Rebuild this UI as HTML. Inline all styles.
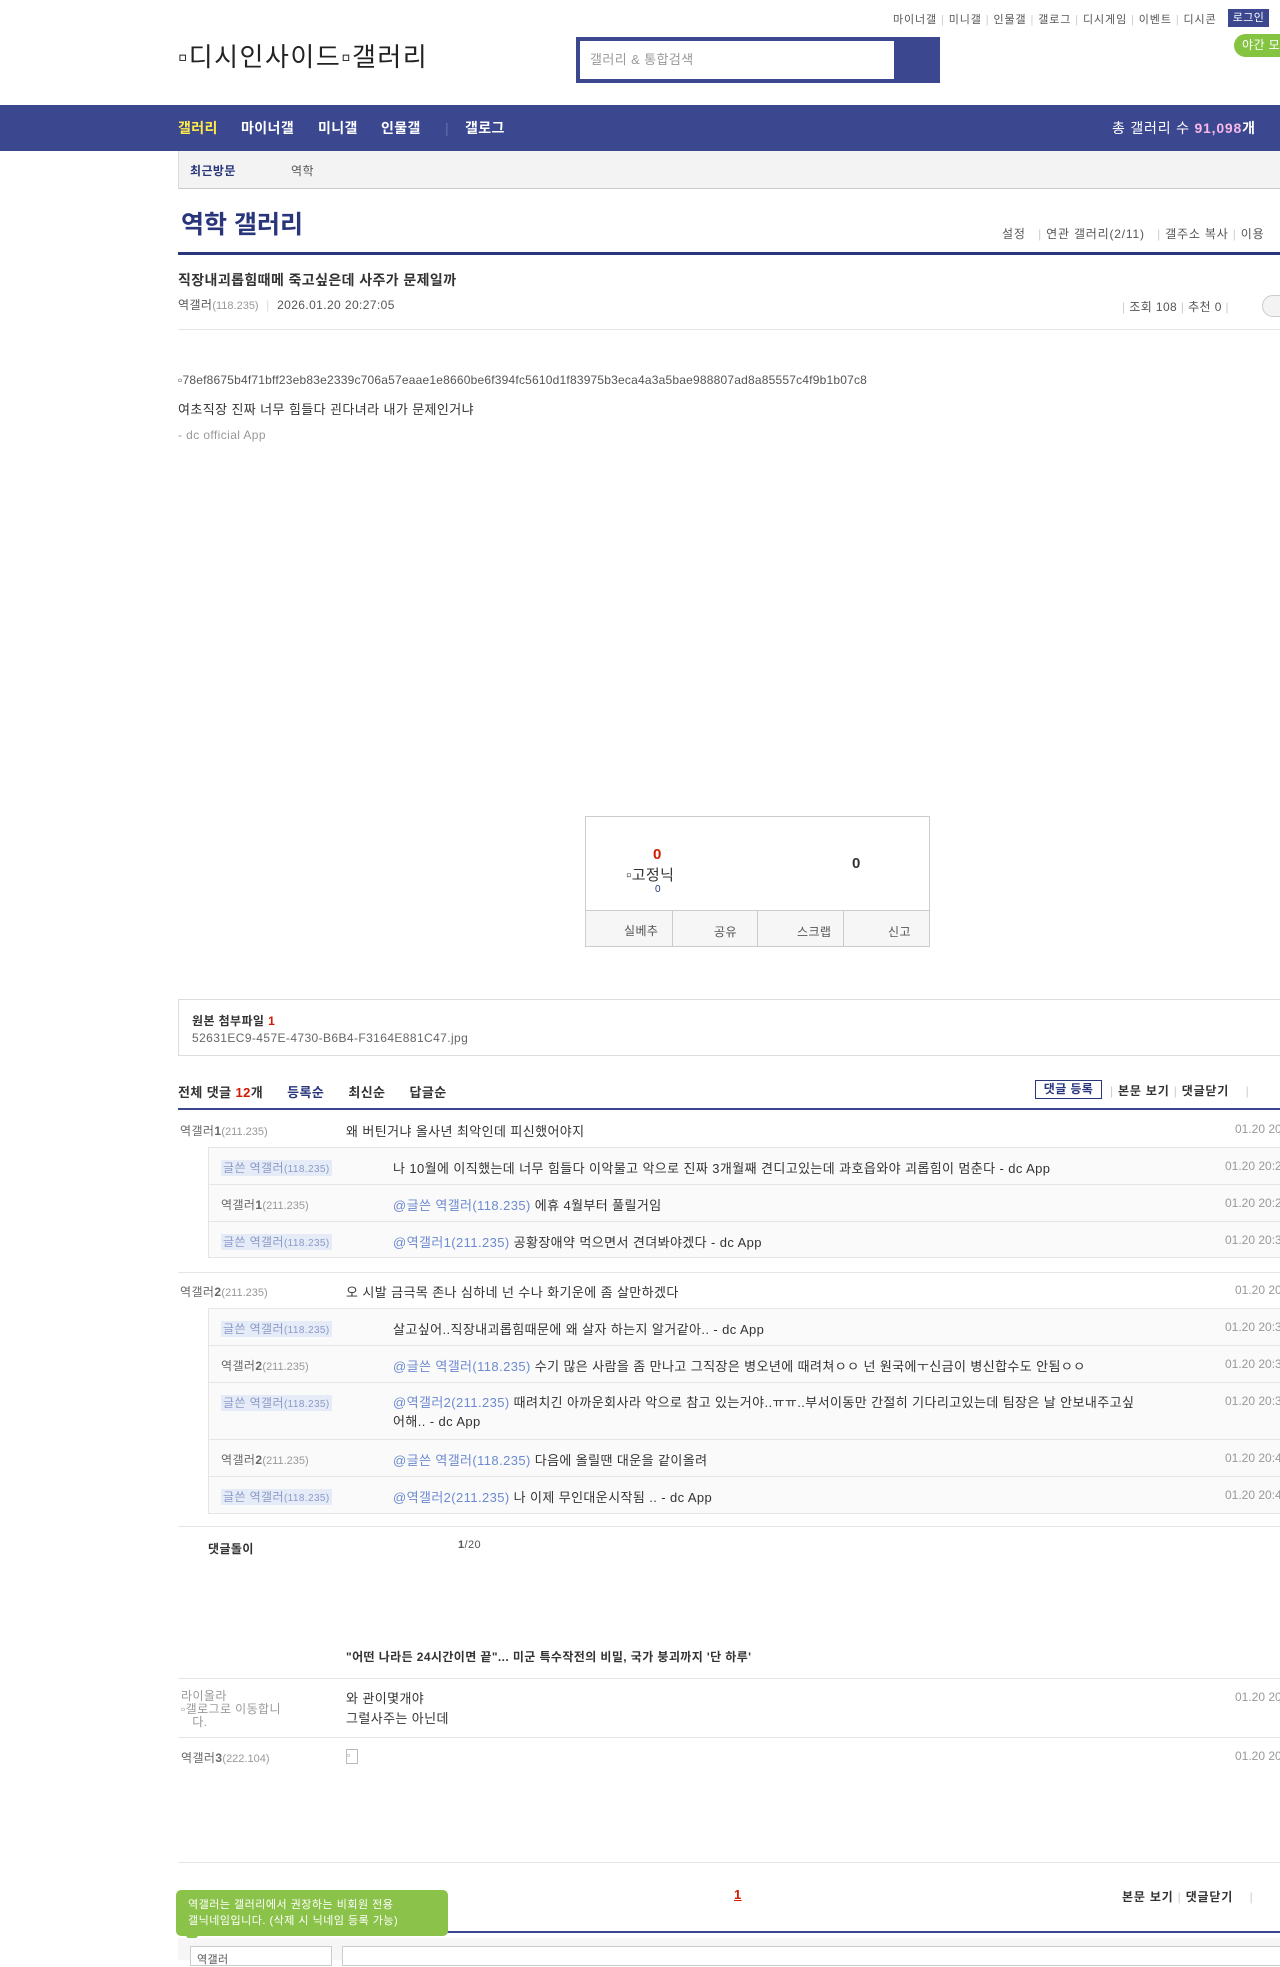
<!DOCTYPE html>
<html><head><meta charset="utf-8">
<style>
*{margin:0;padding:0;box-sizing:border-box}
body{width:1280px;height:1960px;overflow:hidden;background:#fff;font-family:"Liberation Sans","Noto Sans CJK KR",sans-serif;color:#333;position:relative;font-size:13px;letter-spacing:0.4px}
.a{position:absolute;white-space:nowrap}
.nick{color:#666;font-size:12px}
.ip{color:#999;font-size:11px;letter-spacing:0}
.hl{background:#e6ecf7;color:#8a99c8;font-size:12px;padding:1px 2px}
.blue{color:#6c8ad0}
.date{color:#999;font-size:12px;letter-spacing:0}
.line{position:absolute;height:1px;background:#e5e5e5}
.n{position:absolute;top:119px;font-size:14px;font-weight:bold;color:#fff;line-height:18px;white-space:nowrap}
</style></head><body>
<div class="a" style="left:893px;top:11px;font-size:11px;color:#555;letter-spacing:0.9px">마이너갤 <span style="color:#ccc">|</span> 미니갤 <span style="color:#ccc">|</span> 인물갤 <span style="color:#ccc">|</span> 갤로그 <span style="color:#ccc">|</span> 디시게임 <span style="color:#ccc">|</span> 이벤트 <span style="color:#ccc">|</span> 디시콘</div>
<div class="a" style="left:1228px;top:9px;width:41px;height:18px;background:#3b4890;color:#fff;font-size:11px;text-align:center;line-height:18px">로그인</div>
<div class="a" style="left:1234px;top:34px;width:60px;height:23px;background:#84c441;color:#fff;font-size:12px;line-height:23px;padding-left:8px;border-radius:12px">야간 모드</div>
<div class="a" style="left:178px;top:37px;font-size:26px;color:#222;letter-spacing:1.5px">▫디시인사이드▫갤러리</div>
<div class="a" style="left:576px;top:37px;width:364px;height:46px;background:#3b4890"></div>
<div class="a" style="left:580px;top:41px;width:314px;height:38px;background:#fff;color:#999;font-size:13px;line-height:38px;padding-left:10px">갤러리 &amp; 통합검색</div>
<div class="a" style="left:0;top:105px;width:1280px;height:46px;background:#3b4890"></div>
<div class="n" style="left:178px;color:#ffed45">갤러리</div>
<div class="n" style="left:241px">마이너갤</div>
<div class="n" style="left:318px">미니갤</div>
<div class="n" style="left:381px">인물갤</div>
<div class="n" style="left:445px;color:#6470aa;font-weight:normal">|</div>
<div class="n" style="left:465px">갤로그</div>
<div class="a" style="left:1112px;top:119px;font-size:14px;color:#fff;line-height:18px;letter-spacing:0.8px">총 갤러리 수 <b style="color:#f7b8e8">91,098</b><b>개</b></div>
<div class="a" style="left:178px;top:151px;width:1102px;height:38px;background:#f3f3f3;border-bottom:1px solid #ccc;border-left:1px solid #ddd"></div>
<div class="a" style="left:190px;top:162px;font-size:12px;color:#29367c;font-weight:bold">최근방문</div>
<div class="a" style="left:291px;top:162px;font-size:12px;color:#555">역학</div>
<div class="a" style="left:181px;top:205px;font-size:25px;color:#29367c;font-weight:bold;letter-spacing:0">역학 갤러리</div>
<div class="a" style="left:1002px;top:225px;font-size:12px;color:#555;letter-spacing:0.8px">설정 &nbsp;&nbsp;<span style="color:#ccc">|</span> 연관 갤러리(2/11) &nbsp;&nbsp;<span style="color:#ccc">|</span> 갤주소 복사 <span style="color:#ccc">|</span> 이용</div>
<div class="a" style="left:178px;top:252px;width:1102px;height:3px;background:#29367c"></div>
<div class="a" style="left:178px;top:270px;font-size:14px;font-weight:bold;color:#333">직장내괴롭힘때메 죽고싶은데 사주가 문제일까</div>
<div class="a" style="left:178px;top:296px;font-size:12px;color:#555">역갤러<span class="ip">(118.235)</span> <span style="color:#ddd">&nbsp;|&nbsp;</span> 2026.01.20 20:27:05</div>
<div class="a" style="left:1122px;top:298px;font-size:12px;color:#555"><span style="color:#ccc">|</span> 조회 108 <span style="color:#ccc">|</span> 추천 0 <span style="color:#ccc">|</span></div>
<div class="a" style="left:1262px;top:295px;width:30px;height:22px;border:1px solid #ccc;border-radius:11px;background:#f3f3f3"></div>
<div class="line" style="left:178px;top:329px;width:1102px"></div>
<div class="a" style="left:178px;top:373px;font-size:12px;color:#555;letter-spacing:0.2px">▫78ef8675b4f71bff23eb83e2339c706a57eaae1e8660be6f394fc5610d1f83975b3eca4a3a5bae988807ad8a85557c4f9b1b07c8</div>
<div class="a" style="left:178px;top:399px;font-size:13px;color:#333">여초직장 진짜 너무 힘들다 괸다녀라 내가 문제인거냐</div>
<div class="a" style="left:178px;top:428px;font-size:12px;color:#999">- dc official App</div>
<div class="a" style="left:585px;top:816px;width:345px;height:131px;border:1px solid #ccc"></div>
<div class="a" style="left:585px;top:910px;width:345px;height:37px;background:#f6f6f6;border:1px solid #ccc"></div>
<div class="a" style="left:672px;top:910px;width:1px;height:37px;background:#ccc"></div>
<div class="a" style="left:757px;top:910px;width:1px;height:37px;background:#ccc"></div>
<div class="a" style="left:843px;top:910px;width:1px;height:37px;background:#ccc"></div>
<div class="a" style="left:624px;top:922px;font-size:12px;color:#555">실베추</div>
<div class="a" style="left:714px;top:923px;font-size:12px;color:#555">공유</div>
<div class="a" style="left:797px;top:923px;font-size:12px;color:#555">스크랩</div>
<div class="a" style="left:888px;top:923px;font-size:12px;color:#555">신고</div>
<div class="a" style="left:653px;top:846px;font-size:15px;font-weight:bold;color:#d31900">0</div>
<div class="a" style="left:626px;top:864px;font-size:15px;color:#333">▫고정닉</div>
<div class="a" style="left:655px;top:884px;font-size:10px;color:#29367c">0</div>
<div class="a" style="left:852px;top:855px;font-size:15px;font-weight:bold;color:#333">0</div>
<div class="a" style="left:178px;top:999px;width:1110px;height:57px;border:1px solid #ddd"></div>
<div class="a" style="left:192px;top:1012px;font-size:12px;font-weight:bold;color:#333">원본 첨부파일 <span style="color:#d31900">1</span></div>
<div class="a" style="left:192px;top:1031px;font-size:12px;color:#666">52631EC9-457E-4730-B6B4-F3164E881C47.jpg</div>
<div class="a" style="left:178px;top:1082px;font-size:13px;font-weight:bold;color:#333">전체 댓글 <span style="color:#d31900">12</span>개 &nbsp;&nbsp;&nbsp;&nbsp;&nbsp;<span style="color:#29367c">등록순</span> &nbsp;&nbsp;&nbsp;&nbsp;&nbsp;최신순 &nbsp;&nbsp;&nbsp;&nbsp;&nbsp;답글순</div>
<div class="a" style="left:1035px;top:1080px;width:67px;height:19px;border:1px solid #29367c;font-size:12px;font-weight:bold;color:#29367c;text-align:center;line-height:17px">댓글 등록</div>
<div class="a" style="left:1110px;top:1082px;font-size:12px;font-weight:bold;color:#333;letter-spacing:0.8px"><span style="color:#ccc;font-weight:normal">|</span> 본문 보기 <span style="color:#ccc;font-weight:normal">|</span> 댓글닫기 &nbsp;&nbsp;&nbsp;<span style="color:#ccc;font-weight:normal">|</span></div>
<div class="a" style="left:178px;top:1108px;width:1102px;height:2px;background:#3b4890"></div>

<div class="a nick" style="left:180px;top:1122px">역갤러<b>1</b><span class="ip">(211.235)</span></div>
<div class="a" style="left:346px;top:1121px">왜 버틴거냐 올사년 최악인데 피신했어야지</div>
<div class="a date" style="left:1235px;top:1122px">01.20 20:</div>
<div class="a" style="left:208px;top:1147px;width:1080px;height:111px;background:#fafafa;border:1px solid #e5e5e5"></div>
<div class="line" style="left:208px;top:1184px;width:1072px"></div>
<div class="line" style="left:208px;top:1221px;width:1072px"></div>
<div class="a" style="left:221px;top:1159px"><span class="hl">글쓴 역갤러<span style="font-size:10px">(118.235)</span></span></div>
<div class="a" style="left:393px;top:1158px">나 10월에 이직했는데 너무 힘들다 이악물고 악으로 진짜 3개월째 견디고있는데 과호읍와야 괴롭힘이 멈춘다 - dc App</div>
<div class="a date" style="left:1225px;top:1159px">01.20 20:2</div>
<div class="a nick" style="left:221px;top:1196px">역갤러<b>1</b><span class="ip">(211.235)</span></div>
<div class="a" style="left:393px;top:1195px"><span class="blue">@글쓴 역갤러(118.235)</span> 에휴 4월부터 풀릴거임</div>
<div class="a date" style="left:1225px;top:1196px">01.20 20:2</div>
<div class="a" style="left:221px;top:1233px"><span class="hl">글쓴 역갤러<span style="font-size:10px">(118.235)</span></span></div>
<div class="a" style="left:393px;top:1232px"><span class="blue">@역갤러1(211.235)</span> 공황장애약 먹으면서 견뎌봐야겠다 - dc App</div>
<div class="a date" style="left:1225px;top:1233px">01.20 20:3</div>

<div class="line" style="left:178px;top:1272px;width:1102px"></div>
<div class="a nick" style="left:180px;top:1283px">역갤러<b>2</b><span class="ip">(211.235)</span></div>
<div class="a" style="left:346px;top:1282px">오 시발 금극목 존나 심하네 넌 수나 화기운에 좀 살만하겠다</div>
<div class="a date" style="left:1235px;top:1283px">01.20 20:</div>
<div class="a" style="left:208px;top:1308px;width:1080px;height:206px;background:#fafafa;border:1px solid #e5e5e5"></div>
<div class="line" style="left:208px;top:1345px;width:1072px"></div>
<div class="line" style="left:208px;top:1382px;width:1072px"></div>
<div class="line" style="left:208px;top:1439px;width:1072px"></div>
<div class="line" style="left:208px;top:1476px;width:1072px"></div>
<div class="a" style="left:221px;top:1320px"><span class="hl">글쓴 역갤러<span style="font-size:10px">(118.235)</span></span></div>
<div class="a" style="left:393px;top:1319px">살고싶어..직장내괴롭힘때문에 왜 살자 하는지 알거같아.. - dc App</div>
<div class="a date" style="left:1225px;top:1320px">01.20 20:3</div>
<div class="a nick" style="left:221px;top:1357px">역갤러<b>2</b><span class="ip">(211.235)</span></div>
<div class="a" style="left:393px;top:1356px"><span class="blue">@글쓴 역갤러(118.235)</span> 수기 많은 사람을 좀 만나고 그직장은 병오년에 때려쳐ㅇㅇ 넌 원국에ㅜ신금이 병신합수도 안됨ㅇㅇ</div>
<div class="a date" style="left:1225px;top:1357px">01.20 20:3</div>
<div class="a" style="left:221px;top:1394px"><span class="hl">글쓴 역갤러<span style="font-size:10px">(118.235)</span></span></div>
<div class="a" style="left:393px;top:1393px;line-height:19px"><span class="blue">@역갤러2(211.235)</span> 때려치긴 아까운회사라 악으로 참고 있는거야..ㅠㅠ..부서이동만 간절히 기다리고있는데 팀장은 날 안보내주고싶<br>어해.. - dc App</div>
<div class="a date" style="left:1225px;top:1394px">01.20 20:3</div>
<div class="a nick" style="left:221px;top:1451px">역갤러<b>2</b><span class="ip">(211.235)</span></div>
<div class="a" style="left:393px;top:1450px"><span class="blue">@글쓴 역갤러(118.235)</span> 다음에 올릴땐 대운을 같이올려</div>
<div class="a date" style="left:1225px;top:1451px">01.20 20:4</div>
<div class="a" style="left:221px;top:1488px"><span class="hl">글쓴 역갤러<span style="font-size:10px">(118.235)</span></span></div>
<div class="a" style="left:393px;top:1487px"><span class="blue">@역갤러2(211.235)</span> 나 이제 무인대운시작됨 .. - dc App</div>
<div class="a date" style="left:1225px;top:1488px">01.20 20:4</div>

<div class="line" style="left:178px;top:1526px;width:1102px"></div>
<div class="a" style="left:208px;top:1540px;font-size:12px;font-weight:bold;color:#333">댓글돌이</div>
<div class="a" style="left:458px;top:1539px;font-size:11px;color:#555"><b>1</b>/20</div>

<div class="a" style="left:346px;top:1648px;font-size:12px;font-weight:bold;color:#333">"어떤 나라든 24시간이면 끝"... 미군 특수작전의 비밀, 국가 붕괴까지 '단 하루'</div>
<div class="line" style="left:178px;top:1678px;width:1102px"></div>
<div class="a nick" style="left:181px;top:1690px;color:#999;line-height:13px">라이올라<br>▫갤로그로 이동합니<br>&nbsp;&nbsp;&nbsp;다.</div>
<div class="a" style="left:346px;top:1689px;line-height:20px">와 관이몇개야<br>그럴사주는 아닌데</div>
<div class="a date" style="left:1235px;top:1690px">01.20 20</div>
<div class="line" style="left:178px;top:1737px;width:1102px"></div>
<div class="a nick" style="left:181px;top:1749px">역갤러<b>3</b><span class="ip">(222.104)</span></div>
<div class="a" style="left:346px;top:1749px;width:12px;height:15px;border:1px solid #bbb;font-size:9px;color:#888">▫</div>
<div class="a date" style="left:1235px;top:1749px">01.20 20</div>
<div class="line" style="left:178px;top:1862px;width:1102px"></div>

<div class="a" style="left:734px;top:1887px;font-size:13px;font-weight:bold;color:#d31900;text-decoration:underline">1</div>
<div class="a" style="left:1122px;top:1888px;font-size:12px;font-weight:bold;color:#333;letter-spacing:0.8px">본문 보기 <span style="color:#ccc;font-weight:normal">|</span> 댓글닫기 &nbsp;&nbsp;&nbsp;<span style="color:#ccc;font-weight:normal">|</span></div>
<div class="a" style="left:178px;top:1931px;width:1102px;height:2px;background:#3b4890"></div>
<div class="a" style="left:176px;top:1890px;width:272px;height:46px;background:#8bc34a;border-radius:5px;color:#fff;font-size:11px;line-height:16px;padding:7px 0 0 12px;letter-spacing:0.5px">역갤러는 갤러리에서 권장하는 비회원 전용<br>갤닉네임입니다. (삭제 시 닉네임 등록 가능)</div>
<div class="a" style="left:186px;top:1936px;width:0;height:0;border-left:6px solid transparent;border-right:6px solid transparent;border-top:7px solid #8bc34a"></div>
<div class="a" style="left:178px;top:1938px;width:1102px;height:22px;background:#f6f6f6"></div>
<div class="a" style="left:190px;top:1946px;width:142px;height:20px;background:#fff;border:1px solid #ccc;font-size:11px;color:#555;padding:4px 0 0 6px">역갤러</div>
<div class="a" style="left:342px;top:1946px;width:950px;height:20px;background:#fff;border:1px solid #ccc"></div>
</body></html>
